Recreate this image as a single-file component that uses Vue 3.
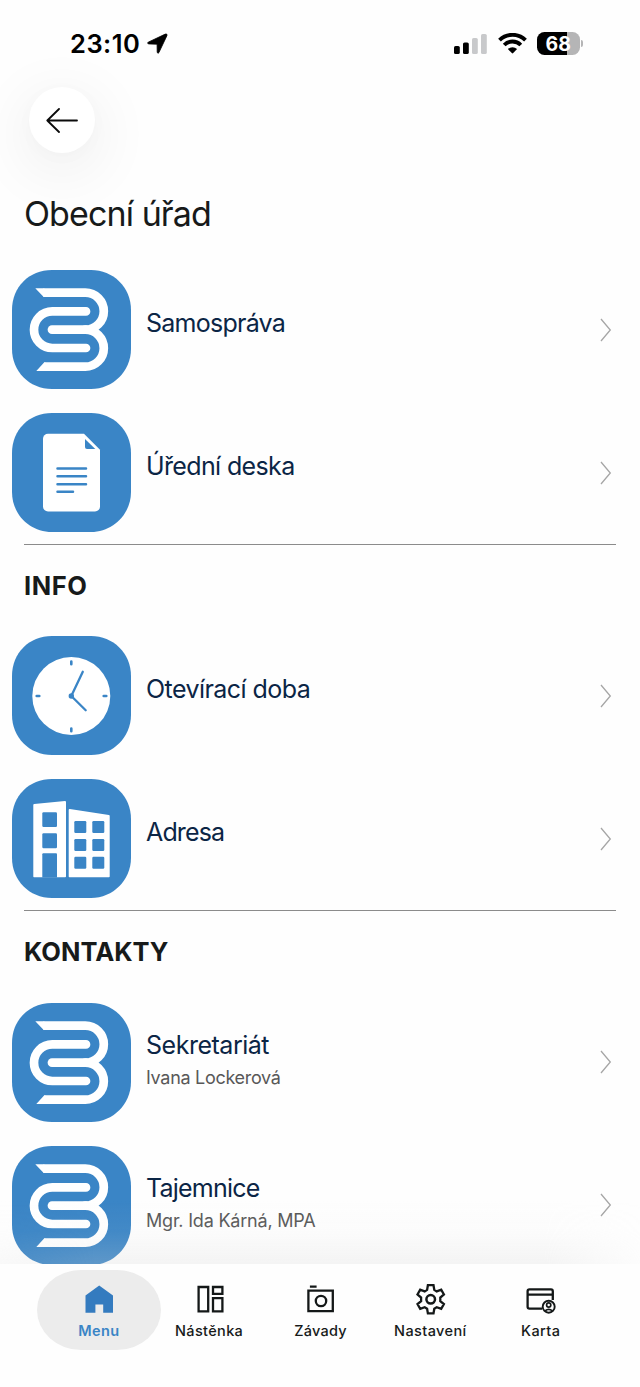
<script setup>
const sections = [
  {
    heading: '',
    rows: [
      { icon: 'logo', title: 'Samospráva', cls: 't-samo' },
      { icon: 'doc', title: 'Úřední deska', cls: 't-deska' },
    ],
  },
  {
    heading: 'INFO',
    rows: [
      { icon: 'clock', title: 'Otevírací doba', cls: 't-doba' },
      { icon: 'building', title: 'Adresa', cls: 't-adresa' },
    ],
  },
  {
    heading: 'KONTAKTY',
    rows: [
      { icon: 'logo', title: 'Sekretariát', sub: 'Ivana Lockerová', cls: 't-sek' },
      { icon: 'logo', title: 'Tajemnice', sub: 'Mgr. Ida Kárná, MPA', cls: 't-taj' },
    ],
  },
]
const tabs = [
  { id: 'home', label: 'Menu', active: true },
  { id: 'board', label: 'Nástěnka' },
  { id: 'camera', label: 'Závady' },
  { id: 'gear', label: 'Nastavení' },
  { id: 'card', label: 'Karta' },
]
const windowXs = [62.3, 80.3]
const windowYs = [41.5, 59.5, 77.2]
</script>

<template>
  <div class="screen">
    <header class="status">
      <span class="time">23:10</span>
      <svg class="location" width="21" height="21" viewBox="0 0 21 21">
        <path d="M1.2 9.2 18.3 1.1Q20.6.4 19.9 2.7L11.9 19.6Q10.8 21.2 10.2 19.2L10.1 11.2 1.7 10.9Q-.3 10.4 1.2 9.2Z" stroke="#000" stroke-width=".8" stroke-linejoin="round" />
      </svg>
      <div class="indicators">
        <svg width="33" height="21" viewBox="0 0 33 21">
          <rect x="0" y="13" width="5.8" height="8" rx="1.6" />
          <rect x="9" y="9.5" width="5.8" height="11.5" rx="1.6" />
          <rect x="18" y="5" width="5.8" height="16" rx="1.6" fill="#c8c9cb" />
          <rect x="27" y="1" width="5.8" height="20" rx="1.6" fill="#c8c9cb" />
        </svg>
        <svg class="wifi" width="29" height="21" viewBox="0 0 29 21">
          <g fill="none" stroke="#000" stroke-width="3.9">
            <path d="M1.5 7.1a18.6 18.6 0 0 1 26 0" />
            <path d="M6.2 12a11.7 11.7 0 0 1 16.6 0" />
          </g>
          <path d="M9.9 16.1a6.7 6.7 0 0 1 9.2 0l-3.9 4q-.7.7-1.4 0Z" />
        </svg>
        <div class="battery"><span>68</span></div>
        <i class="nub"></i>
      </div>
    </header>

    <div class="toolbar">
      <button class="back" aria-label="Zpět">
        <svg width="32" height="26" viewBox="0 0 32 26">
          <path d="M31 13.500H1.300M13 2 1.300 13.500 13 25" fill="none" stroke="#0b0b0b" stroke-width="1.800" stroke-linecap="round" stroke-linejoin="round" />
        </svg>
      </button>
    </div>

    <h1>Obecní úřad</h1>

    <main>
      <section v-for="s in sections" :key="s.heading">
        <h2 v-if="s.heading"><span :class="s.heading.toLowerCase()">{{ s.heading }}</span></h2>
        <div v-for="r in s.rows" :key="r.title" class="row">
          <svg class="tile" width="119" height="119" viewBox="0 0 119 119">
            <path fill="#3a85c6" d="M40 0H79C101 0 119 17 119 40V79C119 101 101 119 79 119H40C17 119 0 101 0 79V40C0 17 17 0 40 0Z" />
            <g v-if="r.icon === 'logo'">
              <g fill="none" stroke="#fff" stroke-width="8.7">
                <path d="M31.5 22.7H73.3a18.5 18.5 0 0 1 0 37a18.5 18.5 0 0 1 0 37H32.5" stroke-linejoin="round" />
                <path d="M74 59.7H40" stroke-linecap="round" />
                <path d="M74 41.4H40.3a18.3 18.3 0 0 0 0 36.6H74" stroke-linecap="round" />
              </g>
              <path fill="#fff" d="M23.3 18.35h9v8.7h-.6ZM24.3 101.05h9v-8.7h-1Z" />
            </g>
            <g v-else-if="r.icon === 'doc'">
              <path fill="#fff" d="M36 20.8H72L88 36.8V93.500a5 5 0 0 1-5 5H36a5 5 0 0 1-5-5V25.800a5 5 0 0 1 5-5Z" />
              <path fill="#3a85c6" d="M73 26 83.300 36H75q-2 0-2-2Z" />
              <path d="M45.500 55.500H74M45.500 63.200H74M45.500 71.200H74M45.500 78.800H61" stroke="#3a85c6" stroke-width="2.500" stroke-linecap="round" />
            </g>
            <g v-else-if="r.icon === 'clock'">
              <circle cx="59.300" cy="60" r="39" fill="#fff" />
              <g fill="none" stroke="#3a85c6" stroke-width="2.600" stroke-linecap="round" stroke-linejoin="round">
                <path d="M59.300 25.500V28.300M59.300 92.500V95.300M24.700 60H27.300M91.700 60H94.300" />
                <path d="M70.800 35.800 59.300 60 73.700 74.200" stroke-width="2.300" />
              </g>
              <circle cx="59.300" cy="60" r="2.700" fill="#3a85c6" />
            </g>
            <g v-else transform="translate(0 .5)">
              <path fill="#fff" d="M22.200 24.600 53 21.500q1 0 1 1V97q0 .8-.8.800H22q-.7 0-.7-.7V25.500q0-.8.9-.9ZM57.800 29.500 96.900 35.600q.8.200.8.900V97q0 .8-.8.800H57.500q-.8 0-.8-.8V30.400q0-1 1.100-.9Z" />
              <path fill="#3a85c6" d="M45 98V74.800q0-1-1-1H31.300q-1 0-1 1V98Z" />
              <g fill="#3a85c6">
                <rect x="30.300" y="32.800" width="14.700" height="14.700" rx="1.200" />
                <rect x="30.300" y="53.800" width="14.700" height="14.900" rx="1.200" />
                <template v-for="x in windowXs" :key="x">
                  <rect v-for="y in windowYs" :key="y" :x="x" :y="y" width="12" height="12" rx="1.200" />
                </template>
              </g>
            </g>
          </svg>
          <div class="text" :class="[r.cls, { double: r.sub }]">
            <div class="title">{{ r.title }}</div>
            <div v-if="r.sub" class="sub">{{ r.sub }}</div>
          </div>
          <svg class="chevron" width="12" height="24" viewBox="0 0 12 24">
            <path d="M1 1 10.300 12 1 23" fill="none" stroke="#a6a6a6" stroke-width="1.300" />
          </svg>
        </div>
      </section>
    </main>

    <div class="fade"></div>
    <nav>
      <div v-for="t in tabs" :key="t.id" class="tab" :class="{ active: t.active }">
        <svg width="32" height="32" viewBox="0 0 32 32" fill="none" stroke="#141818" stroke-width="2.300">
          <path v-if="t.id === 'home'" fill="#347bbf" stroke="none" d="M16.200 2.500 30 12.500V29.800H20.200V21.500H12.400V29.800H2.500V12.500Z" />
          <path v-else-if="t.id === 'board'" d="M4.600 4H14.200V28.400H4.600ZM19 4H28.400V10.800H19ZM19 15.200H28.400V28.400H19Z" />
          <g v-else-if="t.id === 'camera'">
            <path d="M4.400 7.600H28.800V28.200H4.400ZM5.900 3.600H12.600" />
            <circle cx="17" cy="18" r="5.200" />
          </g>
          <g v-else-if="t.id === 'gear'" stroke-linejoin="miter">
            <path d="M13.900 2.200h5.600l.8 4.700 2.400 1.500 4.500-1.700 2.700 4.800-3.600 3v3.600l3.600 3-2.700 4.800-4.500-1.700-2.400 1.500-.8 4.700h-5.600l-.8-4.700-2.400-1.500-4.500 1.700-2.700-4.800 3.600-3v-3.600l-3.600-3 2.700-4.800 4.500 1.700 2.400-1.500Z" />
            <circle cx="16.700" cy="16.300" r="4.300" stroke-width="2.500" />
          </g>
          <g v-else>
            <path d="M17 25.700H4.500Q2.600 25.700 2.600 23.800V8.200Q2.600 6.300 4.500 6.300H26Q27.800 6.300 27.800 8.200V17M2.600 11.600H27.800" />
            <circle cx="23.700" cy="23.700" r="6" stroke-width="1.900" />
            <circle cx="23.700" cy="22" r="2.100" stroke-width="1.700" />
            <path d="M20 28q3.700-3.300 7.400 0" stroke-width="1.700" />
          </g>
        </svg>
        <span :class="'l-' + t.id">{{ t.label }}</span>
      </div>
    </nav>
  </div>
</template>

<style>
body { background: #fefefe; }
</style>

<style scoped>
.screen {
  position: relative;
  width: 640px;
  height: 1387px;
  overflow: hidden;
  background: #fefefe;
  display: flex;
  flex-direction: column;
  font-family: Inter, "Liberation Sans", sans-serif;
  color: #171a1a;
}
.status {
  flex: none;
  height: 87px;
  box-sizing: border-box;
  padding: 27px 57px 0 70px;
  display: flex;
  align-items: flex-start;
  color: #000;
}
.time { font-size: 25.5px; line-height: 34px; font-weight: 600; letter-spacing: .5px; width: 76.500px; white-space: nowrap; }
.location { margin-top: 6px; }
.indicators { margin-left: auto; display: flex; align-items: center; height: 32px; }
.wifi { margin-left: 11px; }
.battery {
  width: 42.500px;
  height: 23px;
  margin-left: 10.500px;
  border-radius: 7.500px;
  background: linear-gradient(90deg, #000 69%, #b5b5b6 69%);
  color: #fff;
  font-size: 19.500px;
  font-weight: 700;
  line-height: 24px;
  text-align: center;
}
.nub { width: 2.500px; height: 7px; margin-left: 1px; border-radius: 0 3px 3px 0; background: #b5b5b6; }
.toolbar { flex: none; height: 103px; padding-left: 29px; }
.back {
  display: flex;
  align-items: center;
  justify-content: center;
  width: 66px;
  height: 66px;
  padding: 0;
  border: 0;
  border-radius: 50%;
  background: #fff;
  box-shadow: 0 14px 60px 8px rgba(0, 0, 0, .06), 0 3px 20px rgba(0, 0, 0, .02);
}
h1 { flex: none; margin: 0; padding-left: 24px; height: 68px; font-size: 34px; line-height: 48px; font-weight: 400; letter-spacing: -.9px; white-space: nowrap; }
h2 {
  margin: 0 24px;
  height: 79.400px;
  border-top: 1px solid #8b8b8b;
  font-size: 25.500px;
  line-height: 81px;
  font-weight: 700;
}
h2 .info { letter-spacing: .6px; }
.row { display: flex; align-items: flex-start; height: 143px; box-sizing: border-box; padding: 12px 28px 12px 12px; }
.tile { flex: none; }
.text { flex: 1; padding: 36.500px 0 0 15px; white-space: nowrap; }
.text.double { padding-top: 26px; }
.title { font-size: 25px; line-height: 32px; color: #0b2545; }
.sub { margin-top: 5.500px; font-size: 18px; line-height: 24px; color: #585858; }
.t-samo .title { letter-spacing: -.75px; }
.t-deska .title { letter-spacing: -.63px; }
.t-doba .title { letter-spacing: -.56px; }
.t-adresa .title { letter-spacing: -.85px; }
.t-sek .title { letter-spacing: -.48px; }
.t-taj .title { letter-spacing: -.78px; }
.t-sek .sub { letter-spacing: -.3px; }
.t-taj .sub { letter-spacing: -.2px; }
.chevron { align-self: center; }
.fade {
  position: absolute;
  left: 0;
  top: 1200px;
  width: 640px;
  height: 64px;
  background: linear-gradient(180deg, rgba(212, 212, 212, 0), rgba(212, 212, 212, .06) 50%, rgba(212, 212, 212, .24));
  mask-image: linear-gradient(90deg, rgba(0, 0, 0, .5), #000 15%, #000 85%, rgba(0, 0, 0, .15));
}
nav {
  position: absolute;
  left: 0;
  top: 1263.500px;
  width: 640px;
  height: 123.500px;
  box-sizing: border-box;
  padding: 6px 43px 0 44px;
  background: #fefefe;
  display: flex;
}
.tab {
  width: 110.400px;
  height: 80.500px;
  box-sizing: border-box;
  padding-top: 13.500px;
  flex: none;
  display: flex;
  flex-direction: column;
  align-items: center;
  font-size: 14.500px;
  line-height: 20px;
  font-weight: 500;
  letter-spacing: .4px;
  white-space: nowrap;
}
.tab span { margin-top: 6px; }
.tab .l-board { letter-spacing: .35px; margin-left: -1px; }
.tab .l-camera { letter-spacing: .25px; padding-left: 1px; }
.tab.active { width: 123.500px; margin: 0 -6.300px 0 -6.800px; border-radius: 44px / 40px; background: #ececec; color: #3a85c6; font-weight: 600; }
</style>
